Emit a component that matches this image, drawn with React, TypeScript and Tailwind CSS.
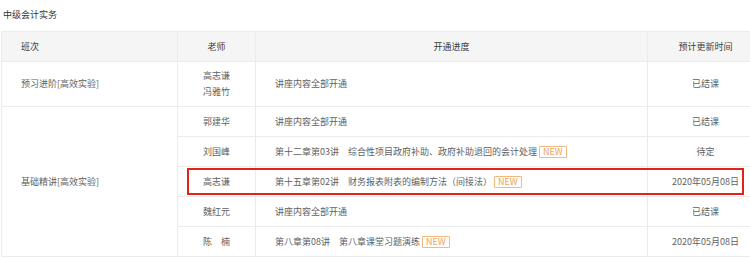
import React from "react";

type Row = {
  teacher: React.ReactNode;
  progress: React.ReactNode;
  time: string;
};

function NewTag() {
  return (
    <span className="ml-[2px] inline-block rounded-[1px] border border-[#f3b77f] px-[3px] align-middle text-[9px] leading-[10px] text-[#f0a259]">
      NEW
    </span>
  );
}

function Lesson({ code, title }: { code: string; title: string }) {
  return (
    <span>
      {code}
      <span className="ml-[9px]">{title}</span>
      <NewTag />
    </span>
  );
}

const basicRows: Row[] = [
  { teacher: "郭建华", progress: "讲座内容全部开通", time: "已结课" },
  {
    teacher: "刘国峰",
    progress: <Lesson code="第十二章第03讲" title="综合性项目政府补助、政府补助退回的会计处理" />,
    time: "待定",
  },
  {
    teacher: "高志谦",
    progress: <Lesson code="第十五章第02讲" title="财务报表附表的编制方法（间接法）" />,
    time: "2020年05月08日",
  },
  { teacher: "魏红元", progress: "讲座内容全部开通", time: "已结课" },
  {
    teacher: "陈　楠",
    progress: <Lesson code="第八章第08讲" title="第八章课堂习题演练" />,
    time: "2020年05月08日",
  },
];

const td = "border border-[#ebebeb] p-0";

export default function App() {
  return (
    <div
      className="relative h-[257px] w-[750px] overflow-hidden bg-white text-[9px] text-[#5f5f5f]"
      style={{ fontFamily: '"Noto Sans CJK SC", "Noto Sans", sans-serif' }}
    >
      <div className="h-[31px] pl-[3px] pt-[9px] leading-[11px] text-[#333]">中级会计实务</div>

      <div className="pl-px">
        <table className="w-[762px] table-fixed border-collapse">
          <colgroup>
            <col className="w-[176px]" />
            <col className="w-[78px]" />
            <col className="w-[392px]" />
            <col className="w-[116px]" />
          </colgroup>
          <thead>
            <tr className="h-[30px] bg-[#f5f5f5] text-[#3c3c3c]">
              <th className={`${td} pl-[19px] text-left font-normal`}>班次</th>
              <th className={`${td} text-center font-normal`}>老师</th>
              <th className={`${td} text-center font-normal`}>开通进度</th>
              <th className={`${td} text-center font-normal`}>预计更新时间</th>
            </tr>
          </thead>
          <tbody>
            <tr className="h-[45px]">
              <td className={`${td} pl-[19px]`}>预习进阶[高效实验]</td>
              <td className={`${td} text-center leading-[16px]`}>
                高志谦
                <br />
                冯雅竹
              </td>
              <td className={`${td} pl-[19px]`}>讲座内容全部开通</td>
              <td className={`${td} text-center`}>已结课</td>
            </tr>
            {basicRows.map((r, i) => (
              <tr key={i} className="h-[30px]">
                {i === 0 && (
                  <td rowSpan={basicRows.length} className={`${td} pl-[19px]`}>
                    基础精讲[高效实验]
                  </td>
                )}
                <td className={`${td} text-center`}>{r.teacher}</td>
                <td className={`${td} whitespace-nowrap pl-[19px]`}>{r.progress}</td>
                <td className={`${td} text-center`}>{r.time}</td>
              </tr>
            ))}
          </tbody>
        </table>
      </div>

      {/* highlight annotation */}
      <div className="pointer-events-none absolute left-[187px] top-[168px] h-[27px] w-[557px] border-2 border-[#e2231a]" />
    </div>
  );
}
